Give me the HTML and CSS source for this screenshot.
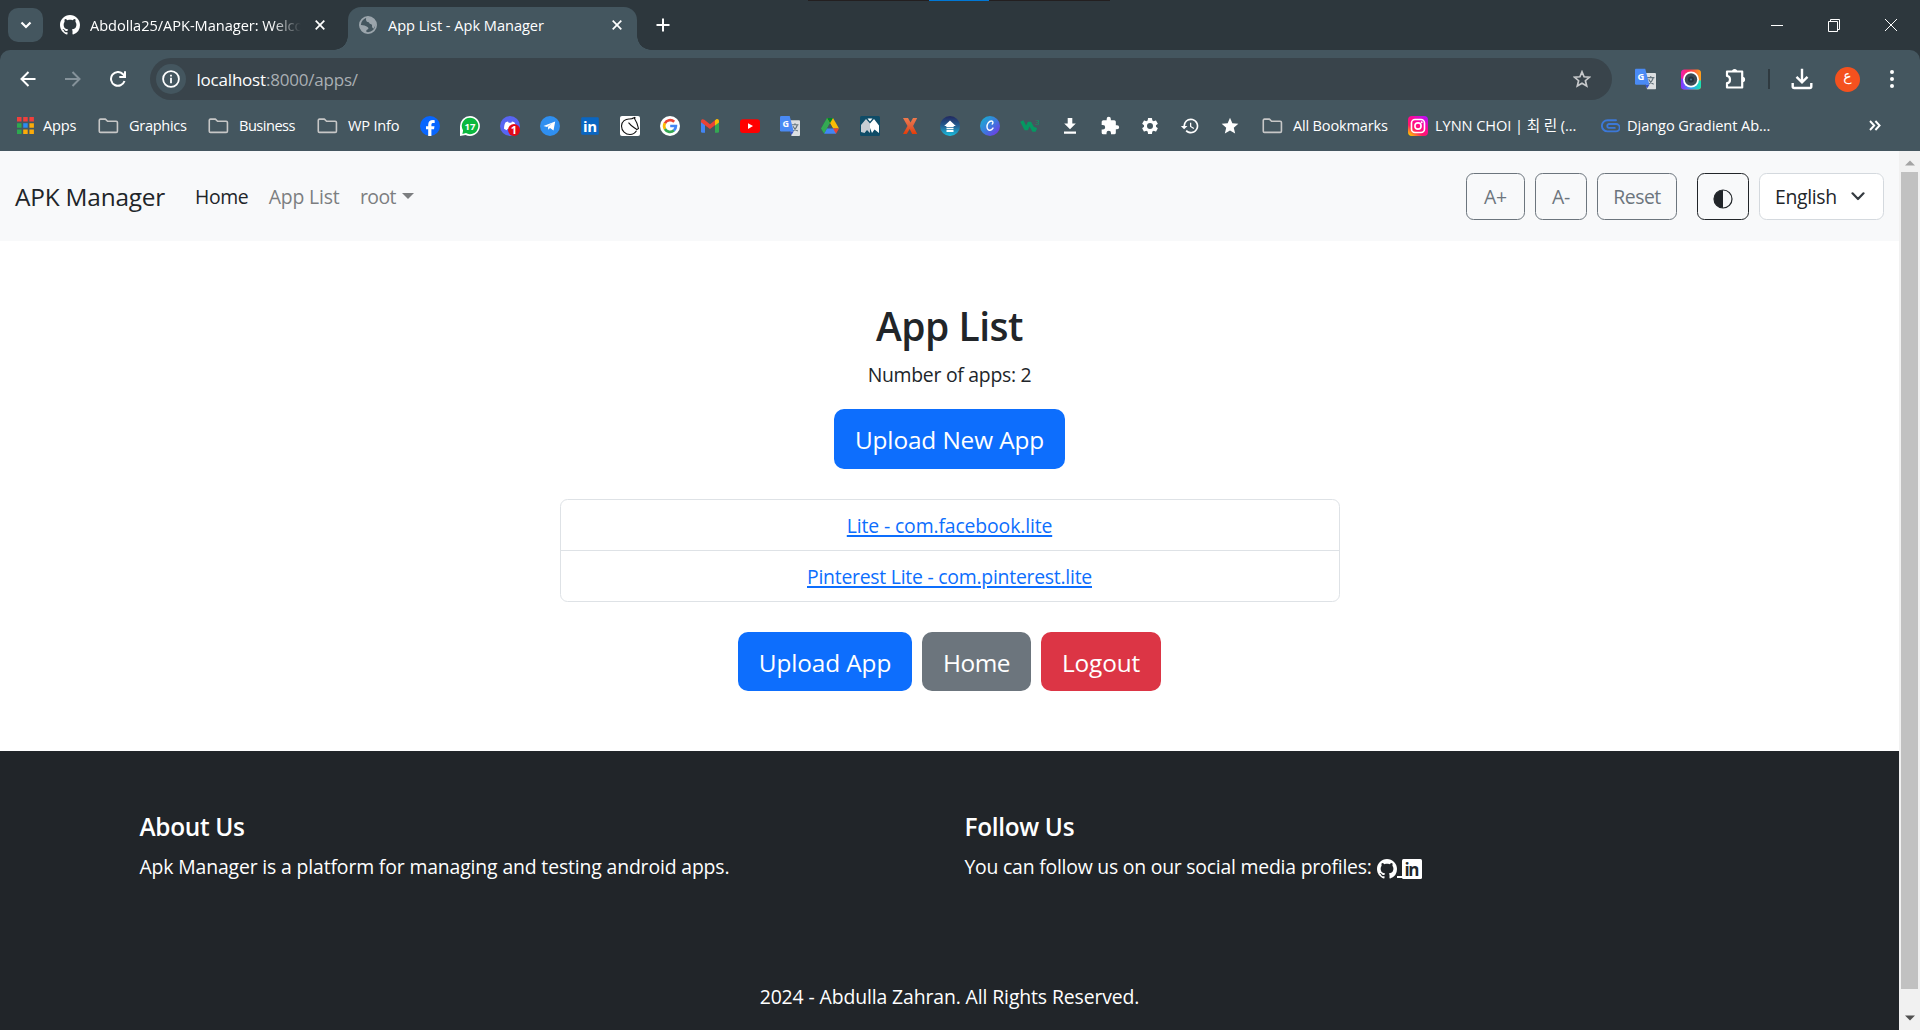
FILE: index.html
```html
<!DOCTYPE html>
<html lang="en">
<head>
<meta charset="utf-8">
<title>App List - Apk Manager</title>
<link rel="stylesheet" href="styles.css">
</head>
<body>
<svg width="0" height="0" class="defs" aria-hidden="true">
  <defs>
    <symbol id="github" viewBox="0 0 16 16"><path fill="currentColor" d="M8 0C3.58 0 0 3.58 0 8c0 3.54 2.29 6.53 5.47 7.59.4.07.55-.17.55-.38 0-.19-.01-.82-.01-1.49-2.01.37-2.53-.49-2.69-.94-.09-.23-.48-.94-.82-1.13-.28-.15-.68-.52-.01-.53.63-.01 1.08.58 1.23.82.72 1.21 1.87.87 2.33.66.07-.52.28-.87.51-1.07-1.78-.2-3.64-.89-3.64-3.95 0-.87.31-1.59.82-2.15-.08-.2-.36-1.02.08-2.12 0 0 .67-.21 2.2.82.64-.18 1.32-.27 2-.27s1.36.09 2 .27c1.53-1.04 2.2-.82 2.2-.82.44 1.1.16 1.92.08 2.12.51.56.82 1.27.82 2.15 0 3.07-1.87 3.75-3.65 3.95.29.25.54.73.54 1.48 0 1.07-.01 1.93-.01 2.2 0 .21.15.46.55.38A8.01 8.01 0 0 0 16 8c0-4.42-3.58-8-8-8z"/></symbol>
    <symbol id="folder" viewBox="0 0 22 17"><path fill="none" stroke="#c7c7c7" stroke-width="1.7" stroke-linejoin="round" d="M1.2 2.6V14q0 1.3 1.3 1.3h16.7q1.3 0 1.3-1.3V4.8q0-1.3-1.3-1.3H10L7.7 1.2H2.5Q1.2 1.2 1.2 2.6z"/></symbol>
    <symbol id="cross" viewBox="0 0 10 10"><path fill="none" stroke="#fff" stroke-width="1.7" d="M.7.7l8.6 8.6M9.3.7L.7 9.3"/></symbol>
    <symbol id="translate" viewBox="0 0 20 20"><path fill="#dcdfe1" d="M8 4.200h11q1 0 1 1V19q0 1-1 1h-7.500z"/><path fill="none" stroke="#66757e" stroke-width="1.100" d="M11.500 8.700h7M15 7.200v1.500M17.300 9c-.8 3-2.600 5-4.600 6M13 10.200c.8 2 2.800 4 4.800 4.800"/><path fill="#4a8af4" d="M1.200 0h8.500l4 15.500H1.200q-1.200 0-1.200-1.200V1.200Q0 0 1.200 0z"/><path fill="#3552c4" d="M9.500 15.500h4.200L11.500 19z"/><text x="2.400" y="10.600" font-size="9" font-weight="700" fill="#fff">G</text></symbol>
    <linearGradient id="canvaFill" x1="0" y1="0" x2="1" y2="1"><stop offset="0" stop-color="#12b6cf"/><stop offset=".5" stop-color="#3b7bdd"/><stop offset="1" stop-color="#7d2ae8"/></linearGradient>
    <linearGradient id="scholarFill" x1="0" y1="0" x2="0" y2="1"><stop offset="0" stop-color="#22285f"/><stop offset=".5" stop-color="#235f92"/><stop offset="1" stop-color="#19bfe0"/></linearGradient>
    <linearGradient id="instaFill" x1=".9" y1="0" x2=".15" y2="1"><stop offset="0" stop-color="#b412ff"/><stop offset=".4" stop-color="#ff0797"/><stop offset=".7" stop-color="#ff1768"/><stop offset="1" stop-color="#ffc400"/></linearGradient>
    <linearGradient id="camFill" x1="0" y1="0" x2="1" y2="0"><stop offset="0" stop-color="#f01cb0"/><stop offset=".4" stop-color="#ff2f55"/><stop offset="1" stop-color="#ffa31a"/></linearGradient>
    <linearGradient id="camSide" x1="0" y1="0" x2="1" y2="0"><stop offset="0" stop-color="#8b2cff"/><stop offset=".5" stop-color="#32a0f5"/><stop offset="1" stop-color="#17e3b0"/></linearGradient>
    <linearGradient id="xFill" x1="0" y1="0" x2="0" y2="1"><stop offset="0" stop-color="#f07a4c"/><stop offset=".5" stop-color="#e2603a"/><stop offset="1" stop-color="#e63b05"/></linearGradient>
  </defs>
</svg>

<div class="browser">
  <div class="top-edge"><i></i></div>

  <header class="tabstrip">
    <button class="tab-search"><svg width="12" height="8" viewBox="0 0 12 8"><path fill="none" stroke="#fff" stroke-width="2.200" d="M1.500 1.500L6 6l4.500-4.500"/></svg></button>
    <div class="tab">
      <svg class="fav" width="20" height="20"><use href="#github"/></svg>
      <span class="tab-title faded">Abdolla25/APK-Manager: Welco</span>
      <svg width="10" height="10"><use href="#cross"/></svg>
    </div>
    <div class="tab active">
      <svg class="globe" width="18" height="18" viewBox="0 0 18 18"><circle cx="9" cy="9" r="8.100" fill="none" stroke="#9ba5ac" stroke-width="1.800"/><path fill="#9ba5ac" d="M1 8.600C2.500 9.700 5 9 7.200 10.300c1.500.9 2.600 1.600 2.100 2.500-.5 1-2 .7-2 2.200v2C3.500 16.600.8 13 1 8.600zM8 1c-1.500 1.500-1 2.500-.8 3.500.3 1.500 1.300 1.400 2 1.500 1.300.2.900 1.900 2.300 2.100 1.800.3 1.700 1.500 1.500 2.900l1.300 1.800C18.500 8 16.500 1.500 8 1z"/></svg>
      <span class="tab-title">App List - Apk Manager</span>
      <svg width="10" height="10"><use href="#cross"/></svg>
    </div>
    <svg class="new-tab" width="14" height="14" viewBox="0 0 14 14"><path stroke="#fff" stroke-width="2" d="M7 .5v13M.5 7h13"/></svg>
    <div class="window-controls">
      <svg width="14" height="14" viewBox="0 0 14 14"><path stroke="#fff" d="M1 7.500h12"/></svg>
      <svg width="14" height="14" viewBox="0 0 14 14"><path fill="none" stroke="#fff" d="M1.500 3.500h9v10h-9zM3.500 3.500v-2h9v10h-2"/></svg>
      <svg width="14" height="14" viewBox="0 0 14 14"><path stroke="#fff" d="M1 1l12 12M13 1L1 13"/></svg>
    </div>
  </header>

  <div class="toolbar">
    <svg class="back" width="16" height="16" viewBox="0 0 16 16"><path fill="none" stroke="#fff" stroke-width="2" d="M15.500 8H1.800M8.500 1L1.500 8l7 7"/></svg>
    <svg class="forward" width="16" height="16" viewBox="0 0 16 16"><path fill="none" stroke="#85929a" stroke-width="2" d="M0 8h14.200M7.500 1l7 7-7 7"/></svg>
    <svg class="reload" width="16" height="16" viewBox="0 0 16 16"><path fill="none" stroke="#fff" stroke-width="2" d="M14.500 10A6.900 6.900 0 1 1 13 3.200L14.500 5"/><path fill="none" stroke="#fff" stroke-width="2" d="M15 .3V6H9.300"/></svg>
    <div class="omnibox">
      <span class="site-info"><svg width="18" height="18" viewBox="0 0 18 18"><circle cx="9" cy="9" r="7.900" fill="none" stroke="#fff" stroke-width="1.800"/><path fill="#fff" d="M8.100 4.700h1.800v1.800H8.100zM8.100 7.800h1.800v5.500H8.100z"/></svg></span>
      <span class="url">localhost<span>:8000/apps/</span></span>
      <svg class="star" width="18" height="18" viewBox="0 0 18 18"><path fill="none" stroke="#c7c9cb" stroke-width="1.700" d="M9 1.800l2.100 5 5.400.4-4.100 3.500 1.300 5.300L9 13.200 4.300 16l1.300-5.300-4.100-3.500 5.400-.4z"/></svg>
    </div>
    <div class="extensions">
      <svg width="21" height="22" viewBox="0 0 20 20"><use href="#translate"/></svg>
      <svg width="20" height="21" viewBox="0 0 20 20"><rect width="20" height="20" rx="3.500" fill="url(#camFill)"/><path d="M0 9v7.500Q0 20 3.500 20h13q3.500 0 3.500-3.500V11z" fill="url(#camSide)"/><circle cx="10" cy="10" r="8" fill="#fff"/><circle cx="10" cy="10" r="6.200" fill="#3c4a54"/><circle cx="10" cy="10" r="3" fill="#24303c"/><circle cx="10" cy="10" r="1" fill="#4a7389"/></svg>
      <svg width="21" height="22" viewBox="0 0 21 22"><path fill="none" stroke="#fff" stroke-width="2.200" stroke-linejoin="round" d="M2 3.500h15.200v16H2v-4.300q3 0 3-3.600T2 8z"/><path fill="#fff" d="M7 3.500a2.600 2.600 0 0 1 5.200 0zM17.500 8.800a2.600 2.600 0 0 1 0 5.200z"/></svg>
    </div>
    <i class="divider"></i>
    <svg class="downloads" width="22" height="22" viewBox="0 0 22 22"><path fill="none" stroke="#fff" stroke-width="2.400" d="M11 .8v13M5.500 8.800L11 14.300l5.500-5.500M1.700 15v3.500q0 1.500 1.500 1.500h15.600q1.500 0 1.500-1.500V15"/></svg>
    <span class="avatar">ع</span>
    <svg class="menu" width="4" height="18" viewBox="0 0 4 18"><path fill="#fff" d="M2 0a2 2 0 1 1 0 4 2 2 0 0 1 0-4zm0 7a2 2 0 1 1 0 4 2 2 0 0 1 0-4zm0 7a2 2 0 1 1 0 4 2 2 0 0 1 0-4z"/></svg>
  </div>

  <nav class="bookmarks">
    <div class="folders">
      <a><svg width="17" height="17" viewBox="0 0 17 17"><path fill="#f1403c" d="M0 0h4.500v4.500H0zM6.200 0h4.500v4.500H6.200zM12.400 0h4.500v4.500h-4.500z"/><path fill="#2da94f" d="M0 6.200h4.500v4.500H0zM0 12.400h4.500v4.500H0z"/><path fill="#2a8bf2" d="M6.200 6.200h4.500v4.500H6.200z"/><path fill="#fbab09" d="M12.400 6.200h4.500v4.500h-4.500zM6.200 12.400h4.500v4.500H6.200zM12.400 12.400h4.500v4.500h-4.500z"/></svg><span class="after-grid">Apps</span></a>
      <a><svg width="21" height="16"><use href="#folder"/></svg><span class="tight">Graphics</span></a>
      <a><svg width="21" height="16"><use href="#folder"/></svg><span class="tighter">Business</span></a>
      <a><svg width="21" height="16"><use href="#folder"/></svg><span>WP Info</span></a>
    </div>
    <div class="site-icons">
      <svg viewBox="0 0 20 20"><circle cx="10" cy="10" r="10" fill="#0866ff"/><path fill="#fff" d="M8.200 20v-6.800H6V10.300h2.200V8.900c0-3.400 1.500-4.900 4.900-4.900l1.600.2v2.700h-1.300c-1.500 0-2 .6-2 2v1.400h3.100l-.5 2.900h-2.600V20z"/></svg>
      <svg viewBox="0 0 20 20"><path fill="#fff" d="M10 0a10 10 0 1 1-4.500 19L0 20V10A10 10 0 0 1 10 0z"/><path fill="#0bb83e" d="M10 1.800A8.200 8.200 0 1 1 6 17.100l-3.600.8.700-3.500A8.200 8.200 0 0 1 10 1.800z"/><text x="10" y="13.500" font-size="9.500" font-weight="700" text-anchor="middle" fill="#fff">17</text></svg>
      <svg viewBox="0 0 20 20"><circle cx="10" cy="10" r="10" fill="#5865f2"/><path fill="#fff" d="M4 12.800c0-3 .8-5.300 1.700-6.500L8 5.600l.7 1.100h2.600l.7-1.100 2.300.7c1 1.400 1.800 3.700 1.700 6.500l-2.700 1.400-.8-1.300h-5l-.8 1.300z"/><circle cx="14" cy="14" r="6" fill="#e20a17"/><text x="14" y="18" font-size="11" font-weight="700" text-anchor="middle" fill="#fff">1</text></svg>
      <svg viewBox="0 0 20 20"><circle cx="10" cy="10" r="10" fill="#2f8ff0"/><path fill="#fff" d="M3.500 10L15.200 5.500 13.500 14.600 10 12l-1.800 1.700-.2-2.900 4.300-3.700-5.300 3.800z"/></svg>
      <svg viewBox="0 0 20 20"><rect x="1.200" y="1.200" width="17.600" height="17.600" rx="1.200" fill="#0a66c2"/><text x="10" y="16" font-size="15" font-weight="700" text-anchor="middle" fill="#fff" textLength="14">in</text></svg>
      <svg viewBox="0 0 20 20"><rect width="20" height="20" rx="2" fill="#fff"/><path fill="none" stroke="#111" stroke-width="1.100" d="M15.200 1.200l-.6 1.600c1.800 2.700 3.200 6 3.900 9.700l-1.700 1.100C14 11.500 11.500 10.500 8.500 6.700M10 3C5.500 2.500 1.500 5.500 1.500 10c0 5 4 8.500 8.500 8.500 3 0 5-1.500 6.500-3.800M10 3l2-.4 3.200-1.400"/></svg>
      <svg viewBox="0 0 20 20"><circle cx="10" cy="10" r="10" fill="#fff"/><g fill="none" stroke-width="2.700"><path stroke="#ea4335" d="M4.800 7.500A5.900 5.900 0 0 1 14.200 5.800"/><path stroke="#fbbc05" d="M5 13.100A5.900 5.900 0 0 1 4.900 7.200"/><path stroke="#34a853" d="M14 14.300A5.900 5.900 0 0 1 4.900 13"/><path stroke="#4285f4" d="M10.200 10h5.700a5.900 5.900 0 0 1-2 4.400"/></g></svg>
      <svg viewBox="0 0 20 20"><path fill="#4285f4" d="M1 5.500l4 3v8.200H2.300Q1 16.700 1 15.500z"/><path fill="#34a853" d="M15 8.500l4-3v10q0 1.200-1.300 1.200H15z"/><path fill="#ea4335" d="M5 4.300l5 3.900 5-3.900v4.900l-5 3.800L1 6.300V5C1 3 3.200 2.800 4.300 3.700z"/><path fill="#fbbc04" d="M15 4.300l1-.8c1.400-1 3 0 3 1.700v1.400l-4 3z"/></svg>
      <svg viewBox="0 0 20 20"><rect y="3.200" width="20" height="13.800" rx="3" fill="#f00"/><path fill="#fff" d="M8 7.200l5 2.800-5 2.900z"/></svg>
      <svg viewBox="0 0 20 20"><use href="#translate"/></svg>
      <svg viewBox="0 0 20 20"><path fill="#00913c" d="M7 2h6L4.200 17.800 1 12.500z"/><path fill="#34a853" d="M7 2h3v5.300L4.200 17.800 1 12.500z"/><path fill="#fbbc04" d="M7 2h6l6 10.500h-6z"/><path fill="#00832d" d="M7 2h6l-3 5.300z"/><path fill="#44565f" d="M10 7.300l3 5.200H7z"/><path fill="#4285f4" d="M7 12.500h9L16 17.800H4.200z"/><path fill="#ea4335" d="M13 12.500h6l-3 5.300z"/></svg>
      <svg viewBox="0 0 20 20"><rect width="20" height="20" rx="1.500" fill="#0f4c67"/><path fill="#c8ced4" d="M1 16V9l5-6 4 4.500V17l-3-3-2.500 3z"/><path fill="#fff" d="M10 7.500L14 3l5 6.500V17l-4.500-3.500L12 17l-2-5zM7.500 2.500h5L10 5.500z"/></svg>
      <svg viewBox="0 0 20 20"><path fill="url(#xFill)" d="M3 2h5l2.500 4.500L13 2h4.200l-4.100 8 4.100 8h-5l-2.500-5-3 5H3l4.500-8z"/></svg>
      <svg viewBox="0 0 20 20"><circle cx="10" cy="10" r="10" fill="url(#scholarFill)"/><path fill="#fff" d="M10 4.500L15.800 10H13.700v1H6.300v-1H4.200zM6.500 11.800h7v1.500h-7zM6.500 14h7v2h-7z"/></svg>
      <svg viewBox="0 0 20 20"><circle cx="10" cy="10" r="10" fill="url(#canvaFill)"/><path fill="none" stroke="#fff" stroke-width="1.400" stroke-linecap="round" d="M12.200 8c1.200-1 1-3-.8-3C8.800 5 6.900 8 7 11c.2 2.300 1.500 3.500 3 3.300 1.400-.2 2.400-1.200 3-2.200"/></svg>
      <svg viewBox="0 0 20 20"><path fill="none" stroke="#059862" stroke-width="3.600" stroke-linejoin="bevel" d="M1.800 5L6.200 13.500 9.500 6.500 14 15l1.500-3.500"/><text x="15.300" y="8.500" font-size="8" fill="#059862">3</text></svg>
      <svg viewBox="0 0 20 20"><path fill="#fff" d="M7.700 2h4.600v5.500h3.500L10 13.200 4.200 7.500h3.500zM4 15.500h12v2.200H4z"/></svg>
      <svg viewBox="0 0 24 24"><path fill="#fff" d="M20.500 11H19V7a2 2 0 0 0-2-2h-4V3.500a2.500 2.500 0 0 0-5 0V5H4a2 2 0 0 0-2 2v3.800h1.500a2.700 2.700 0 0 1 0 5.400H2V20a2 2 0 0 0 2 2h3.800v-1.500a2.700 2.700 0 0 1 5.400 0V22H17a2 2 0 0 0 2-2v-4h1.500a2.500 2.500 0 0 0 0-5z"/></svg>
      <svg viewBox="0 0 24 24"><path fill="#fff" d="M19.140 12.940c.04-.3.060-.610.060-.940s-.020-.640-.070-.940l2.030-1.580a.49.49 0 0 0 .12-.610l-1.920-3.320a.488.488 0 0 0-.590-.220l-2.390.960c-.5-.380-1.030-.7-1.620-.940L14.400 2.810a.484.484 0 0 0-.480-.410h-3.840c-.240 0-.430.170-.470.410l-.360 2.540c-.590.240-1.130.570-1.620.940l-2.390-.960c-.220-.080-.470 0-.590.220L2.740 8.870c-.120.210-.080.470.120.610l2.030 1.580c-.050.300-.090.630-.090.940s.020.640.070.940l-2.030 1.580a.49.49 0 0 0-.12.610l1.920 3.320c.12.220.370.290.59.220l2.390-.96c.5.380 1.030.7 1.620.94l.36 2.540c.050.240.24.410.48.410h3.840c.240 0 .440-.170.470-.410l.360-2.540c.590-.240 1.130-.560 1.620-.940l2.390.960c.220.080.470 0 .59-.22l1.920-3.320c.12-.22.070-.47-.12-.61zM12 15.600a3.600 3.600 0 1 1 0-7.200 3.600 3.600 0 0 1 0 7.200z"/></svg>
      <svg viewBox="0 0 24 24"><path fill="#fff" d="M13 3a9 9 0 0 0-9 9H1l3.890 3.890.07.14L9 12H6a7 7 0 1 1 2.060 4.940l-1.420 1.420A9 9 0 1 0 13 3zm-1 5v5l4.280 2.540.72-1.210-3.500-2.080V8z"/></svg>
      <svg viewBox="0 0 24 24"><path fill="#fff" d="M12 17.270L18.180 21l-1.640-7.030L22 9.240l-7.190-.61L12 2 9.190 8.630 2 9.240l5.460 4.730L5.820 21z"/></svg>
    </div>
    <div class="links">
      <a><svg width="21" height="16"><use href="#folder"/></svg><span>All Bookmarks</span></a>
      <a><svg width="20" height="20" viewBox="0 0 20 20"><rect width="20" height="20" rx="4" fill="url(#instaFill)"/><rect x="3.500" y="3.500" width="13" height="13" rx="3.500" fill="none" stroke="#fff" stroke-width="1.600"/><circle cx="10" cy="10" r="3.100" fill="none" stroke="#fff" stroke-width="1.600"/><circle cx="13.700" cy="6.300" r="1" fill="#fff"/></svg><span class="wide">LYNN CHOI | 최 린 (...</span></a>
      <a><svg width="19" height="14" viewBox="0 0 19 14"><path fill="none" stroke="#3c78d8" stroke-width="1.900" stroke-linecap="round" d="M15 1.200H6.500a5.300 5.300 0 0 0 0 11.200H15a3.300 3.300 0 0 0 0-7.400H7.800a2 2 0 0 0 0 3.900h6"/></svg><span class="wide">Django Gradient Ab...</span></a>
    </div>
    <svg class="overflow" width="12" height="11" viewBox="0 0 12 11"><path fill="none" stroke="#fff" stroke-width="1.900" d="M1 1l4.200 4.500L1 10M6.400 1l4.200 4.500L6.400 10"/></svg>
  </nav>

  <div class="viewport">
    <div class="page">
      <nav class="navbar">
        <a class="brand">APK Manager</a>
        <div class="nav-links"><a class="current">Home</a><a>App List</a><a class="dropdown">root</a></div>
        <div class="nav-tools">
          <button class="btn-outline grow">A+</button>
          <button class="btn-outline shrink">A-</button>
          <button class="btn-outline reset">Reset</button>
          <button class="btn-outline contrast"><svg width="20" height="20" viewBox="0 0 20 20"><circle cx="10" cy="10" r="9" fill="none" stroke="#212529" stroke-width="1.200"/><path fill="#212529" d="M10 1a9 9 0 0 0 0 18z"/></svg></button>
          <div class="select"><span>English</span><svg width="14" height="9" viewBox="0 0 14 9"><path fill="none" stroke="#343a40" stroke-width="2.200" stroke-linecap="round" stroke-linejoin="round" d="M1.500 1.300L7 7l5.500-5.700"/></svg></div>
        </div>
      </nav>

      <main>
        <h1>App List</h1>
        <p>Number of apps: 2</p>
        <a class="btn upload-new">Upload New App</a>
        <ul class="app-list">
          <li><a>Lite - com.facebook.lite</a></li>
          <li><a class="long">Pinterest Lite - com.pinterest.lite</a></li>
        </ul>
        <div class="actions">
          <a class="btn upload">Upload App</a>
          <a class="btn home">Home</a>
          <a class="btn logout">Logout</a>
        </div>
      </main>

      <footer>
        <div class="footer-columns">
          <section>
            <h5>About Us</h5>
            <p class="about">Apk Manager is a platform for managing and testing android apps.</p>
          </section>
          <section>
            <h5>Follow Us</h5>
            <p><span class="follow">You can follow us on our social media profiles:</span><a class="social"><svg width="20" height="20"><use href="#github"/></svg><i></i><svg width="20" height="20" viewBox="0 0 20 20"><rect width="20" height="20" rx="1.500" fill="#fff"/><text x="10" y="16.500" font-size="17" font-weight="700" text-anchor="middle" textLength="15" fill="#212529">in</text></svg></a></p>
          </section>
        </div>
        <p class="copyright">2024 - Abdulla Zahran. All Rights Reserved.</p>
      </footer>
    </div>
    <div class="scrollbar">
      <svg width="10" height="6" viewBox="0 0 10 6"><path fill="#a3a3a3" d="M0 5.500L5 .5l5 5z"/></svg>
      <i class="thumb"></i>
      <svg width="10" height="6" viewBox="0 0 10 6"><path fill="#505050" d="M0 .5h10l-5 5z"/></svg>
    </div>
  </div>
</div>
</body>
</html>
```
FILE: styles.css
```css
* { box-sizing: border-box; }

body {
  margin: 0;
  background: #fff;
  color: #212529;
  font: 19.4px/30px "Open Sans", "Noto Sans CJK KR", sans-serif;
  letter-spacing: -0.01em;
}

h1, h5, p, ul { margin: 0; padding: 0; }
button { padding: 0; border: 0; font: inherit; letter-spacing: inherit; }
svg { display: block; flex: none; }
.defs { position: absolute; }

.browser {
  position: relative;
  width: 1920px;
  height: 1030px;
  overflow: hidden;
  display: flex;
  flex-direction: column;
  background: #2d373d;
}

.top-edge {
  position: absolute;
  top: 0;
  left: 808px;
  width: 302px;
  height: 1px;
  background: #231f20;
  z-index: 2;
}
.top-edge i { display: block; width: 60px; height: 1px; margin-left: 121px; background: #0078d7; }

/* Tab strip */
.tabstrip {
  flex: none;
  display: flex;
  align-items: center;
  height: 50px;
  padding-left: 8px;
  color: #fff;
  font-size: 14.6px;
  letter-spacing: -0.002em;
}
.tab-search {
  display: grid;
  place-items: center;
  width: 35px;
  height: 34px;
  border-radius: 10px;
  background: #44565f;
}
.tab {
  position: relative;
  display: flex;
  align-items: center;
  width: 305px;
  padding: 0 23px 0 17px;
  white-space: nowrap;
}
.tab-title { flex: 1; margin-left: 10px; }
.faded {
  flex: none;
  width: 211px;
  margin-right: 14px;
  -webkit-mask-image: linear-gradient(90deg, #000 86%, transparent 100%);
  mask-image: linear-gradient(90deg, #000 86%, transparent 100%);
}
.tab.active {
  width: 289px;
  height: 43px;
  margin-top: 7px;
  padding: 0 15px 7px 11px;
  border-radius: 13px 13px 0 0;
  background: #44565f;
}
.tab.active::before, .tab.active::after {
  content: "";
  position: absolute;
  bottom: 0;
  width: 14px;
  height: 14px;
}
.tab.active::before { left: -14px; background: radial-gradient(circle at 0 0, transparent 13.5px, #44565f 14px); }
.tab.active::after { right: -14px; background: radial-gradient(circle at 100% 0, transparent 13.5px, #44565f 14px); }
.tab.active .tab-title { margin-left: 11px; }
.new-tab { margin-left: 18.500px; }
.window-controls { display: flex; gap: 43px; margin: -1px 22px 0 auto; }

/* Address bar */
.toolbar {
  flex: none;
  display: flex;
  align-items: center;
  height: 50px;
  padding: 8px 26px 0 19.500px;
  border-radius: 10px 10px 0 0;
  background: #44565f;
}
.forward { margin-left: 29.500px; }
.reload { margin-left: 29px; }
.omnibox {
  display: flex;
  align-items: center;
  width: 1462px;
  height: 42px;
  margin-left: 24px;
  padding: 0 21px 0 6px;
  border-radius: 21px;
  background: #39444b;
}
.site-info {
  display: grid;
  place-items: center;
  width: 30px;
  height: 30px;
  border-radius: 50%;
  background: #44565f;
}
.url { margin: 1px 0 0 10.500px; color: #fff; font-size: 17px; letter-spacing: -0.012em; }
.url span { color: #a9afb3; }
.star { margin-left: auto; }
.extensions { display: flex; align-items: center; gap: 24.500px; margin-left: 23px; }
.divider { width: 2px; height: 20px; margin-left: 22px; background: #2f3a40; }
.downloads { margin-left: 21px; }
.avatar {
  display: flex;
  justify-content: center;
  width: 25px;
  height: 25px;
  margin-left: 22px;
  border-radius: 50%;
  background: #f4511e;
  color: #fff;
  font: 14px/19px "DejaVu Sans", sans-serif;
}
.menu { margin-left: auto; }

/* Bookmarks bar */
.bookmarks {
  flex: none;
  display: flex;
  align-items: center;
  height: 51px;
  padding: 0 39px 0 17px;
  background: #44565f;
  color: #fff;
  font-size: 14.6px;
  white-space: nowrap;
}
.bookmarks a { display: flex; align-items: center; }
.bookmarks a span { margin-left: 10px; padding-bottom: 2px; }
.bookmarks a .after-grid { margin-left: 9px; }
.bookmarks .tight { letter-spacing: -0.023em; }
.bookmarks .tighter { letter-spacing: -0.035em; }
.bookmarks a .wide { margin-left: 7px; letter-spacing: -0.005em; }
.folders { display: grid; grid-template-columns: 81px 110px 109px 103px; align-items: center; }
.site-icons { display: flex; gap: 20px; }
.site-icons svg { width: 20px; height: 20px; letter-spacing: 0; }
.links { display: grid; grid-template-columns: 146px 193px 170px; align-items: center; margin-left: 22px; }
.overflow { margin-left: auto; }

/* Web page */
.viewport { flex: 1; display: flex; min-height: 0; }
.page { width: 1899px; display: flex; flex-direction: column; background: #fff; }
.navbar {
  flex: none;
  display: flex;
  align-items: center;
  height: 90px;
  padding: 0 15px;
  background: #f8f9fa;
}
.brand { width: 180px; padding-top: 2px; font-size: 24.4px; }
.nav-links { display: flex; padding-top: 2px; color: #7c7e80; }
.nav-links a { margin-right: 20.500px; }
.nav-links .current { color: #212529; letter-spacing: -0.02em; }
.dropdown { display: flex; align-items: center; letter-spacing: -0.028em; }
.dropdown::after {
  content: "";
  margin: -3px 0 0 6px;
  border: 6px solid transparent;
  border-top-color: currentColor;
  border-bottom: 0;
}
.nav-tools { display: flex; gap: 10px; margin-left: auto; }
.btn-outline {
  height: 47px;
  padding-top: 2px;
  border: 1px solid #6c757d;
  border-radius: 7.500px;
  background: transparent;
  color: #6c757d;
}
.grow { width: 59px; }
.shrink { width: 52px; }
.reset { width: 80px; margin-right: 10px; letter-spacing: -0.025em; }
.contrast { display: grid; place-items: center; width: 52px; padding-top: 5px; border-color: #212529; }
.select {
  display: flex;
  align-items: center;
  justify-content: space-between;
  width: 125px;
  height: 47px;
  padding: 0 18px 0 15px;
  border: 1px solid #d4d9de;
  border-radius: 7.500px;
  background: #fff;
  letter-spacing: -0.017em;
}
.select span { padding-top: 2px; }

main {
  flex: none;
  display: flex;
  flex-direction: column;
  align-items: center;
  height: 510px;
  padding-top: 61px;
}
h1 { margin-bottom: 10px; font-size: 39px; font-weight: 600; line-height: 48px; letter-spacing: -0.013em; }
main p { letter-spacing: -0.014em; }
.btn {
  display: grid;
  place-items: center;
  height: 60px;
  padding-top: 1px;
  border-radius: 10px;
  background: #0d6efd;
  color: #fff;
  font-size: 24.4px;
  letter-spacing: -0.005em;
}
.upload-new { width: 231px; margin-top: 19px; }
.app-list {
  width: 780px;
  margin: 30px 0;
  border: 1px solid #dee2e6;
  border-radius: 7.500px;
  list-style: none;
  text-align: center;
}
.app-list li { height: 50px; padding-top: 11px; }
.app-list li + li { height: 51px; border-top: 1px solid #dee2e6; }
.app-list a {
  color: #0d6efd;
  letter-spacing: -0.007em;
  text-decoration: underline;
  text-decoration-thickness: 1.500px;
  text-underline-offset: 2px;
}
.app-list .long { letter-spacing: -0.0125em; }
.actions { display: flex; gap: 10px; }
.actions .btn { height: 59px; padding-top: 3px; }
.upload { width: 174px; }
.home { width: 109px; background: #6c757d; letter-spacing: -0.02em; }
.logout { width: 120px; background: #dc3545; }

footer { flex: 1; padding: 61px 0 0; background: #212529; color: #fff; }
.footer-columns { display: grid; grid-template-columns: 825px 1fr; height: 170px; padding-left: 139.500px; }
h5 { margin-bottom: 10px; font-size: 24.4px; font-weight: 600; line-height: 30px; letter-spacing: -0.013em; }
footer p { display: flex; }
.about { letter-spacing: -0.0075em; }
.follow { letter-spacing: -0.0115em; }
.social { display: flex; align-items: center; margin: 5px 0 0 5.500px; height: 24px; }
.social i { width: 5px; height: 2px; margin-top: 15px; background: #fff; }
.social svg { letter-spacing: 0; }
.copyright { justify-content: center; letter-spacing: -0.006em; }

.scrollbar {
  width: 21px;
  display: flex;
  flex-direction: column;
  align-items: center;
  padding: 9px 0 9px;
  background: #f1f1f1;
}
.thumb { width: 17px; height: 817px; margin: 6px 0 auto; background: #c1c1c1; }
```
